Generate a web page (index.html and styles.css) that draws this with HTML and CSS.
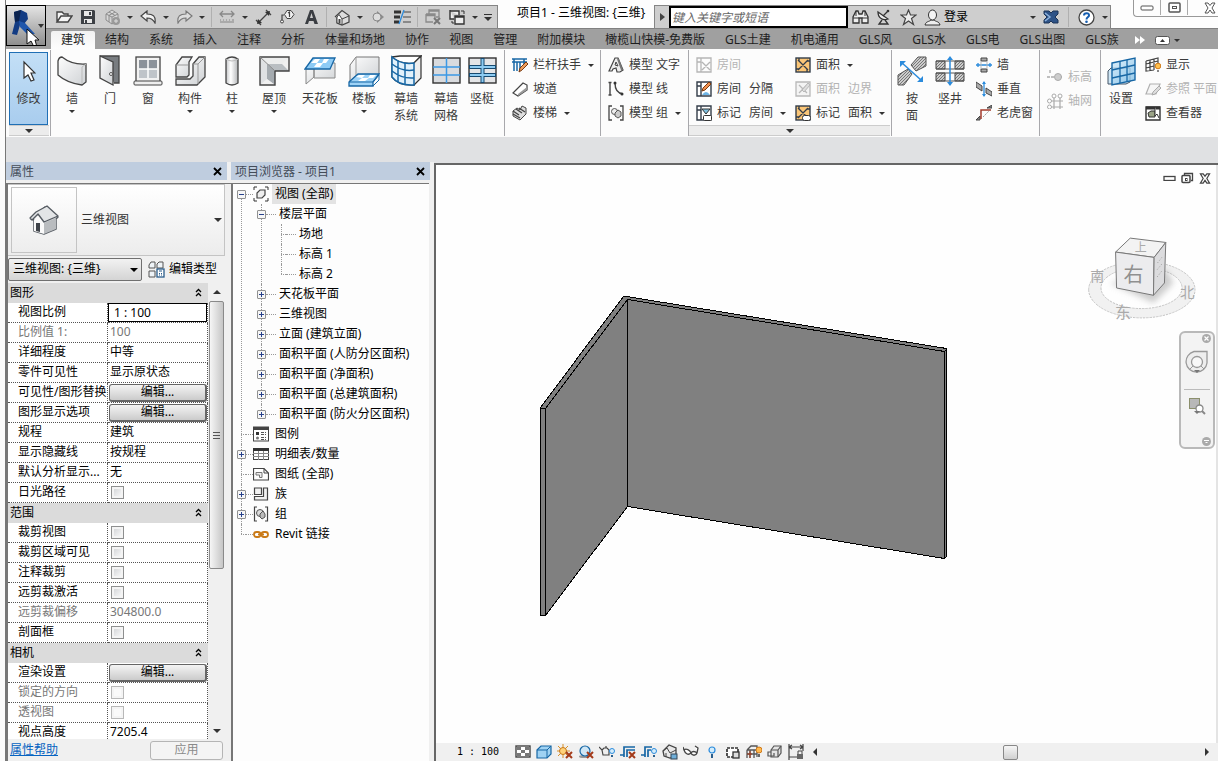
FILE: index.html
```html
<!DOCTYPE html>
<html lang="zh-CN">
<head>
<meta charset="utf-8">
<title>项目1 - 三维视图: {三维}</title>
<link rel="stylesheet" href="styles.css">
</head>
<body>
<svg class="defs" width="0" height="0" aria-hidden="true">
  <defs>
    <linearGradient id="face" x1="0" y1="0" x2="1" y2="1"><stop offset="0" stop-color="#fdfdfd"/><stop offset="1" stop-color="#cfd2d5"/></linearGradient>
    <linearGradient id="tube" x1="0" y1="0" x2="1" y2="0"><stop offset="0" stop-color="#c4c6c8"/><stop offset=".4" stop-color="#fff"/><stop offset="1" stop-color="#b4b6b8"/></linearGradient>
    <linearGradient id="sky" x1="0" y1="0" x2="1" y2="1"><stop offset="0" stop-color="#d5ecfa"/><stop offset="1" stop-color="#7dbde6"/></linearGradient>
    <pattern id="hatch" width="3" height="3" patternUnits="userSpaceOnUse"><rect width="3" height="3" fill="#ccc"/><path d="M0 3L3 0" stroke="#777" stroke-width="1"/></pattern>
    <symbol id="area" viewBox="0 0 16 16"><rect x="1" y="1" width="14" height="14" fill="#fbc677" stroke="#333d49" stroke-width="1.4"/><path d="M3 3L13 13M13 3L3 13M4 1V4M12 12V15M1 12H4M12 4H15" stroke="#333d49" stroke-width="1.3" fill="none"/></symbol>
    <symbol id="house" viewBox="0 0 32 32"><path d="M3 15L17 3L30 13L28 15V25L16 30L6 27V16Z" fill="#dcdee0" stroke="#555b62" stroke-width="1.5" stroke-linejoin="round"/><path d="M16 19V30L28 25V14Z" fill="#b9bcbf"/><path d="M6 16L10 11L16 19V30L6 27Z" fill="#fafafa"/><path d="M2 14L8 8L19 2L30 12L16 18L10 10L4 16Z" fill="#e3e5e7" stroke="#555b62" stroke-width="1.3" stroke-linejoin="round"/><path d="M8 19H12V28L8 27Z" fill="#3f444a"/></symbol>
  </defs>
</svg>
<div class="window">
  <header class="header">
    <button class="app-button" aria-label="应用程序菜单">
      <svg width="38" height="38" viewBox="0 0 38 38"><path d="M7 5L14 3L20 6L21 12L17 17L13 18L10 28L5 27L8 15Z" fill="#123b83"/><path d="M12 14L18 16L28 27L20 27L13 20Z" fill="#1f56ac"/><path d="M7 5L14 3L12 14L8 15Z" fill="#0b234f"/><path d="M31 17H37L34 21Z" fill="#333"/><path d="M20 22V37L24 34L27 40H30L28 33H32Z" fill="#fff" stroke="#111"/></svg>
    </button>
    <div class="title-row">
      <nav class="quick" aria-label="快速访问工具栏">
        <button class="tool" aria-label="打开"><svg width="18" height="16" viewBox="0 0 18 16"><path d="M2 13V3H7L9 5H13V7M2 13L6 7H17L13 13Z" fill="#f4f4f4" stroke="#444" stroke-width="1.4"/></svg></button>
        <button class="tool" aria-label="保存"><svg width="16" height="16" viewBox="0 0 16 16"><path d="M1 1H14L15 2V15H1Z" fill="#3d4045"/><path d="M4 2H12V7H4ZM4 10H12V14H4Z" fill="#e8e8e8"/><path d="M9 3H11V6H9ZM5 11H7V14H5Z" fill="#3d4045"/></svg></button>
        <button class="tool" aria-label="同步"><svg width="17" height="17" viewBox="0 0 17 17"><path d="M2 5L8 1L14 5V11L8 15L2 11ZM2 5L8 8L14 5M8 8V15M5 3L11 6.500M11 3L5 6.500V13" fill="#d8d8d8" stroke="#8c8c8c"/><circle cx="12" cy="12" r="4" fill="#999"/><path d="M10 12H14M12 10V14" stroke="#ddd"/></svg></button>
        <button class="drop" aria-label="同步选项"><i class="caret"></i></button>
        <button class="tool" aria-label="放弃"><svg width="17" height="14" viewBox="0 0 17 14"><path d="M1 6L7 1V4C13 4 16 6 15 13C13 9 11 8 7 8V11Z" fill="#f2f2f2" stroke="#444" stroke-width="1.2"/></svg></button>
        <button class="drop" aria-label="放弃列表"><i class="caret"></i></button>
        <button class="tool" aria-label="重做"><svg width="17" height="14" viewBox="0 0 17 14"><path d="M16 6L10 1V4C4 4 1 6 2 13C4 9 6 8 10 8V11Z" fill="#ddd" stroke="#777" stroke-width="1.1"/></svg></button>
        <button class="drop" aria-label="重做列表"><i class="caret"></i></button>
        <span class="sep"></span>
        <button class="tool" aria-label="测量"><svg width="16" height="14" viewBox="0 0 16 14"><path d="M1 4H15M4 1L1 4L4 7M12 1L15 4L12 7" fill="none" stroke="#888" stroke-width="1.3"/><path d="M1 9H15V13H1Z" fill="#aaa"/><path d="M3 9V11M6 9V11M9 9V11M12 9V11" stroke="#eee"/></svg></button>
        <button class="drop" aria-label="测量选项"><i class="caret"></i></button>
        <button class="tool" aria-label="对齐尺寸标注"><svg width="17" height="17" viewBox="0 0 17 17"><path d="M3 14L14 3M1 11L6 16M11 1L16 6" stroke="#444" stroke-width="1.3"/><path d="M2 15L3 10L7 14ZM15 2L10 3L14 7Z" fill="#333"/></svg></button>
        <button class="tool" aria-label="按类别标记"><svg width="16" height="16" viewBox="0 0 16 16"><path d="M8 1.500H12L15 5.500L12 9.500H8L5.500 5.500Z" fill="#f2f2f2" stroke="#444"/><path d="M9 4L10.500 3V8M5 6H3V11" stroke="#444" stroke-width="1.2" fill="none"/><circle cx="3" cy="12.500" r="1.500" fill="#eee" stroke="#444"/></svg></button>
        <button class="tool" aria-label="文字"><svg width="15" height="16" viewBox="0 0 15 16"><path d="M1 15L6 1H9L14 15H10.500L9.500 12H5L4 15ZM6 9H9L7.500 4Z" fill="#3a3d42"/></svg></button>
        <span class="sep"></span>
        <button class="tool" aria-label="默认三维视图"><svg width="17" height="17" viewBox="0 0 17 17"><path d="M1 8L8 1.500L15 6.500V13L8 16L3 14V8" fill="#ddd" stroke="#444" stroke-width="1.200"/><path d="M3 8L5 5.500L8 10V15.500L3 14Z" fill="#fff" stroke="#444"/><path d="M8 10L15 7" stroke="#444"/><path d="M4.500 10H6.500V14H4.500Z" fill="#444"/></svg></button>
        <button class="drop" aria-label="三维视图选项"><i class="caret"></i></button>
        <button class="tool" aria-label="剖面"><svg width="16" height="16" viewBox="0 0 16 16"><path d="M7 2L14 8L7 14Z" fill="#8c8c8c"/><circle cx="7" cy="8" r="4" fill="#ddd" stroke="#888"/></svg></button>
        <button class="tool" aria-label="细线"><svg width="17" height="16" viewBox="0 0 17 16"><path d="M0 3H7M0 8H6M0 13H5" stroke="#333" stroke-width="3"/><path d="M10 3H17M9 8H17M9 13H17" stroke="#444"/><path d="M5 15L10 1" stroke="#2b8bdc" stroke-width="1.3"/></svg></button>
        <span class="sep"></span>
        <button class="tool" aria-label="关闭隐藏窗口"><svg width="16" height="16" viewBox="0 0 16 16"><path d="M4 5V1H14V8H11M1 5H10V9M1 5V13H8M1 6.500H10M4 2H14" fill="none" stroke="#8a8a8a" stroke-width="1.300"/><path d="M9 9L15 15M15 9L9 15" stroke="#777" stroke-width="2"/></svg></button>
        <button class="tool" aria-label="切换窗口"><svg width="17" height="16" viewBox="0 0 17 16"><path d="M1 2H10V6M1 1V10H5M6 7H15V15H6ZM6 8H15" fill="#eee" stroke="#333" stroke-width="1.400"/><path d="M12 2H15V5M3 12V14H5" stroke="#333" fill="none"/></svg></button>
        <button class="drop" aria-label="窗口列表"><i class="caret"></i></button>
        <button class="drop custom" aria-label="自定义快速访问工具栏"><i class="bar"></i><i class="caret big"></i></button>
      </nav>
      <h1 class="title">项目1 - 三维视图: {三维}</h1>
      <div class="info">
        <button class="drop" aria-label="展开"><svg width="5" height="8"><path d="M0 0L5 4L0 8Z" fill="#444"/></svg></button>
        <input class="search" type="text" placeholder="键入关键字或短语" aria-label="搜索">
        <button class="tool" aria-label="搜索"><svg width="17" height="16" viewBox="0 0 17 16"><path d="M1 14V8L4 2H6L7 5H10L11 2H13L16 8V14H10V9H7V14Z" fill="#eee" stroke="#333" stroke-width="1.300"/><path d="M1 9H7M10 9H16M4 2V7M13 2V7" stroke="#333"/></svg></button>
        <button class="tool" aria-label="通讯中心"><svg width="16" height="17" viewBox="0 0 16 17"><path d="M2 3C2 9 7 12 12 10Z" fill="#eee" stroke="#333" stroke-width="1.300"/><path d="M7 7L12 2M6 11L3 15H12L9 11" stroke="#333" stroke-width="1.300" fill="none"/><circle cx="12" cy="2" r="1.300" fill="#333"/></svg></button>
        <button class="tool" aria-label="收藏夹"><svg width="17" height="17" viewBox="0 0 17 17"><path d="M8.500 1L10.500 6H16L11.500 9.500L13.500 15.500L8.500 12L3.500 15.500L5.500 9.500L1 6H6.500Z" fill="#eee" stroke="#444" stroke-width="1.200"/></svg></button>
        <button class="tool" aria-label="用户"><svg width="17" height="17" viewBox="0 0 17 17"><path d="M1 16C2 12 5 13 7 11H10C12 13 15 12 16 16Z" fill="#eee" stroke="#333"/><ellipse cx="8.500" cy="6" rx="4" ry="5" fill="#f4f4f4" stroke="#333"/></svg></button>
        <button class="login">登录<i class="caret"></i></button>
        <button class="tool exchange" aria-label="Exchange 应用程序"><svg width="16" height="14" viewBox="0 0 16 14"><path d="M1 1H6L8 3L10 1H15V4L12 7L15 10V13H10L8 11L6 13H1V10L4 7L1 4Z" fill="#2e5387" stroke="#1c3457"/><path d="M2 3L7 7L2 11" fill="none" stroke="#8fb4df" stroke-width="1.500"/></svg></button>
        <span class="sep"></span>
        <button class="tool help" aria-label="帮助"><svg width="17" height="17" viewBox="0 0 17 17"><circle cx="8.500" cy="8.500" r="7.500" fill="#fff" stroke="#444" stroke-width="1.300"/><path d="M6 6.500C6 3.500 11.500 3.500 11 6.500C11 8 8.500 8 8.500 10.500" stroke="#155db0" stroke-width="2" fill="none"/><circle cx="8.500" cy="12.800" r="1.300" fill="#155db0"/></svg></button>
        <button class="drop narrow" aria-label="帮助选项"><i class="caret"></i></button>
      </div>
      <div class="win-controls">
        <button aria-label="最小化"><svg width="14" height="8"><rect x="1" y="2" width="12" height="4" rx="1" fill="#fff" stroke="#555"/></svg></button>
        <button aria-label="还原"><svg width="13" height="12"><rect x="1" y="1" width="11" height="9" rx="1" fill="#fff" stroke="#555" stroke-width="1.500"/><rect x="4.500" y="4.500" width="4" height="2" fill="#fff" stroke="#555"/></svg></button>
        <button aria-label="关闭"><svg width="12" height="12" viewBox="0 0 12 12"><path d="M1 1H4L6 3.500L8 1H11L8 6L11 11H8L6 8L4 11H1L4 6Z" fill="#fff" stroke="#555"/></svg></button>
      </div>
    </div>
    <nav class="tabs" aria-label="功能区选项卡">
      <button class="tab on">建筑</button><button class="tab">结构</button><button class="tab">系统</button><button class="tab">插入</button><button class="tab">注释</button><button class="tab">分析</button><button class="tab">体量和场地</button><button class="tab">协作</button><button class="tab">视图</button><button class="tab">管理</button><button class="tab">附加模块</button><button class="tab">橄榄山快模-免费版</button><button class="tab">GLS土建</button><button class="tab">机电通用</button><button class="tab">GLS风</button><button class="tab">GLS水</button><button class="tab">GLS电</button><button class="tab">GLS出图</button><button class="tab">GLS族</button>
      <button class="more" aria-label="更多选项卡"><svg width="10" height="8"><path d="M0 0L5 4L0 8ZM5 0L10 4L5 8Z" fill="#fff"/></svg></button>
      <button class="more" aria-label="最小化功能区"><svg width="15" height="9"><rect x=".5" y=".5" width="14" height="8" rx="2" fill="#fff" stroke="#555"/><path d="M5 6H10L7.500 3Z" fill="#333"/></svg><i class="caret"></i></button>
    </nav>
  </header>

  <section class="ribbon" aria-label="建筑">
    <div class="group modify">
      <button class="modify-button"><svg width="14" height="24" viewBox="0 0 14 24"><path d="M2 2V18L6 15L9 21L12 20L9 13H13Z" fill="#fff" stroke="#333" stroke-width="1.200"/></svg><span>修改</span></button>
      <button class="expander" aria-label="选择"><i class="caret big"></i></button>
    </div>
    <div class="group build">
      <button class="large w40"><svg viewBox="0 0 32 32"><path d="M2 6Q3 2 6 2Q16 10 30 9V27L26 30Q11 28 2 20Z" fill="url(#face)" stroke="#444" stroke-width="1.300"/><path d="M26 12V29M26 12L30 9" fill="none" stroke="#bbb"/></svg><span>墙</span><i class="caret"></i></button>
      <button class="large w36"><svg viewBox="0 0 32 32"><path d="M6 1H25V28H20" fill="#787c80" stroke="#444" stroke-width="1.300"/><path d="M6 1L19 7V30L6 23Z" fill="url(#face)" stroke="#444" stroke-width="1.300"/><circle cx="17" cy="19" r="1.500" fill="#fff" stroke="#555"/></svg><span>门</span></button>
      <button class="large w40"><svg viewBox="0 0 32 32"><rect x="4" y="2" width="24" height="25" fill="#f2f2f2" stroke="#444" stroke-width="1.300"/><path d="M7 5H25V23H7Z" fill="#8b929a"/><path d="M7 14H25V23H7Z" fill="#bfc4c9"/><path d="M16 5V23M7 14H25" stroke="#fff" stroke-width="1.500"/><rect x="2" y="26" width="28" height="4" rx="1" fill="#eee" stroke="#444"/></svg><span>窗</span></button>
      <button class="large w44"><svg viewBox="0 0 32 32"><path d="M2 10L8 2H18L15 7V20L13 22H2Z" fill="url(#face)" stroke="#444" stroke-width="1.300"/><path d="M19 9L25 2H31V22L23 30H2V24H16L19 21Z" fill="url(#face)" stroke="#444" stroke-width="1.300"/><path d="M2 10H14M19 9H24L31 2M24 9V29" fill="none" stroke="#999"/></svg><span>构件</span><i class="caret"></i></button>
      <button class="large w40"><svg viewBox="0 0 32 32"><path d="M10 4Q16 0 22 4V28Q16 32 10 28Z" fill="url(#tube)" stroke="#444" stroke-width="1.300"/><path d="M10 4Q16 8 22 4" fill="none" stroke="#bbb"/></svg><span>柱</span><i class="caret"></i></button>
      <button class="large w44"><svg viewBox="0 0 32 32"><path d="M2 2H31V16H17V30H2Z" fill="#dfe1e3"/><path d="M2 2H31L25 9H9Z" fill="#eceded"/><path d="M9 9H25L31 16H17Z" fill="#b9bec2"/><path d="M9 9V24L17 30V16Z" fill="#a5abb0"/><path d="M2 30L9 24L17 30Z" fill="#f0f0f0"/><path d="M31 2V16L24 9Z" fill="#f0f0f0"/><path d="M2 2H31V16H17V30H2Z" fill="none" stroke="#444" stroke-width="1.400"/><path d="M2 2L17 16" stroke="#888"/></svg><span>屋顶</span><i class="caret"></i></button>
      <button class="large w48"><svg viewBox="0 0 32 32"><path d="M2 14V29L10 22V14ZM10 8H31V23H10Z" fill="url(#face)" stroke="#888"/><path d="M1 14L9 3H31L26 14Z" fill="#8ecbf5" stroke="#1767a5" stroke-width="1.300"/><path d="M7 8L11 4H16L13 8ZM13 8H19L16 12H10ZM20 4H25L22 8H18Z" fill="#fff"/></svg><span>天花板</span></button>
      <button class="large w40"><svg viewBox="0 0 32 32"><path d="M2 10L8 2H31V20H9L2 26Z" fill="url(#face)" stroke="#777"/><path d="M8 2V20" stroke="#999"/><path d="M1 27L10 19H31L25 27V31H1Z" fill="#9ed3f7" stroke="#1767a5" stroke-width="1.300"/><path d="M8 22L11 20H17L14 23ZM14 23H21L17 26H10ZM22 20H28L25 23H20Z" fill="#fff"/><path d="M1 27H25L31 20V25L25 31" fill="none" stroke="#1767a5"/></svg><span>楼板</span><i class="caret"></i></button>
      <button class="large w44"><svg viewBox="0 0 32 32"><path d="M2 2L10 1H31L24 8V30Q9 31 2 22Z" fill="#fff" stroke="#333" stroke-width="1.300"/><path d="M2 2Q11 10 24 8L31 1V23L24 30" fill="#eee" stroke="#333" stroke-width="1.200"/><path d="M2 2Q11 10 24 8V30Q9 31 2 22Z" fill="#e2f1fb" stroke="#1767a5" stroke-width="1.500"/><path d="M2 9Q12 17 24 15M2 16Q12 24 24 23M8 6V27M15 8V29" fill="none" stroke="#1767a5" stroke-width="1.500"/></svg><span>幕墙<br>系统</span></button>
      <button class="large w36"><svg viewBox="0 0 32 32"><rect x="3" y="3" width="27" height="25" fill="#d9dbde" stroke="#333" stroke-width="1.400"/><path d="M16.500 3V28M3 12H30M3 20H30" stroke="#3d99e5" stroke-width="1.500"/></svg><span>幕墙<br>网格</span></button>
      <button class="large w36"><svg viewBox="0 0 32 32"><rect x="3" y="3" width="27" height="25" fill="#e4e5e7" stroke="#333" stroke-width="1.400"/><path d="M3 12H30M3 20H30M16.500 3V28" stroke="#174a70" stroke-width="4"/><path d="M4 12H29M4 20H29M16.500 4V27" stroke="#8ccbf2" stroke-width="2"/></svg><span>竖梃</span></button>
    </div>
    <div class="group rows circulation">
      <button class="small"><svg viewBox="0 0 16 16"><path d="M0 2H15M0 5H15M2 2V14M5 5V14M8 5V14M12 2V7" stroke="#1767a5" stroke-width="1.500"/><path d="M7 15L8 11L14 5L16 7L10 13Z" fill="#f0a060" stroke="#7a3b10"/></svg>栏杆扶手<i class="caret"></i></button>
      <button class="small"><svg viewBox="0 0 16 16"><path d="M1 12L11 2L15 4V9L6 15Z" fill="#fff" stroke="#444" stroke-width="1.200"/><path d="M6 15L15 9V6L6 13Z" fill="#999"/></svg>坡道</button>
      <button class="small"><svg viewBox="0 0 16 16"><path d="M1 6L5 3L8 5L10 1L14 3V9L8 15L1 11Z" fill="#ddd" stroke="#444"/><path d="M1 6L7 10M4 4L10 8M7 3L13 7M1 9L8 13" stroke="#444" stroke-width="1.300"/></svg>楼梯<i class="caret"></i></button>
    </div>
    <div class="group rows model-group">
      <button class="small"><svg viewBox="0 0 16 16"><path d="M1 14L7 1H10L15 13L12 15H9L8 11L5 12L4 14Z" fill="#eee" stroke="#444" stroke-width="1.200"/><path d="M7 8L8 5L10 9Z" fill="#fff" stroke="#444"/><path d="M10 2L14 13" stroke="#777" stroke-width="2"/></svg><span class="pair"><span>模型</span> <span>文字</span></span></button>
      <button class="small"><svg viewBox="0 0 16 16"><path d="M2 2V14M0.500 1.500H3.500M0.500 14H3.500M7 2Q7 12 15 13" stroke="#444" stroke-width="1.400" fill="none"/><circle cx="7" cy="2" r="1.500" fill="#333"/><circle cx="14" cy="13" r="1.500" fill="#333"/></svg><span class="pair"><span>模型</span> <span>线</span></span></button>
      <button class="small"><svg viewBox="0 0 16 16"><path d="M4 1H1V15H4M12 1H15V15H12" fill="none" stroke="#444" stroke-width="1.300"/><circle cx="6.500" cy="6.500" r="3" fill="#eee" stroke="#555"/><path d="M7 8L10 5L13 7V11L10 13L7 11Z" fill="#ccc" stroke="#555"/></svg><span class="pair"><span>模型</span> <span>组</span></span><i class="caret"></i></button>
    </div>
    <div class="group room">
      <div class="room-grid">
        <button class="small" disabled><svg viewBox="0 0 16 16"><path d="M1 1H15V15H1ZM5 1V15M1 5H5M6 5L14 13M14 5L6 13" fill="none" stroke="#b5b5b5" stroke-width="1.300"/></svg>房间</button>
        <button class="small"><svg width="16" height="16"><use href="#area"/></svg>面积<i class="caret"></i></button>
        <button class="small"><svg viewBox="0 0 16 16"><path d="M1 1H15V15H1ZM5 1V15M1 5H5" fill="#fff" stroke="#333d49" stroke-width="1.400"/><path d="M6 14Q10 8 14 14Z" fill="#6db4e6"/><path d="M6 10L7 7L13 1L15 3L9 9Z" fill="#f09050" stroke="#7a3b10"/></svg><span class="pair wide"><span>房间</span> <span>分隔</span></span></button>
        <button class="small" disabled><svg viewBox="0 0 16 16"><path d="M1 1H15V15H1ZM4 4L12 12M4 12L12 4" fill="#f4f4f4" stroke="#b8b8b8" stroke-width="1.300"/><path d="M7 9L13 2L15 4L9 11Z" fill="#ddd" stroke="#b8b8b8"/></svg><span class="pair wide"><span>面积</span> <span>边界</span></span></button>
        <button class="small"><svg viewBox="0 0 16 16"><path d="M1 1H15V15H1ZM5 1V15M1 5H5" fill="#fff" stroke="#333d49" stroke-width="1.400"/><path d="M6 4H14L10 9Z" fill="#7ec0e0" stroke="#333"/><rect x="7.500" y="10.500" width="8" height="5" rx="1" fill="#fff" stroke="#333"/></svg><span class="pair wide"><span>标记</span> <span>房间</span></span><i class="caret"></i></button>
        <button class="small"><svg viewBox="0 0 16 16"><use href="#area" width="16" height="16"/><rect x="7.500" y="10.500" width="8" height="5" rx="2" fill="#fff" stroke="#333"/></svg><span class="pair wide"><span>标记</span> <span>面积</span></span><i class="caret"></i></button>
      </div>
      <button class="expander" aria-label="房间和面积"><i class="caret big"></i></button>
    </div>
    <div class="group opening">
      <button class="large w40"><svg viewBox="0 0 32 32"><path d="M2 30V20L12 14L16 19L8 30ZM30 2H22L15 10L20 16L30 11Z" fill="url(#hatch)" stroke="#555"/><path d="M5 7L25 25" stroke="#2b8bdc" stroke-width="1.500"/><path d="M4 6H10L4 12ZM27 27H21L27 21Z" fill="#2b8bdc"/></svg><span>按<br>面</span></button>
      <button class="large w36"><svg viewBox="0 0 32 32"><path d="M2 6H11V14H2ZM21 6H30V14H21ZM2 18H11V26H2ZM21 18H30V26H21Z" fill="url(#hatch)" stroke="#444"/><path d="M2 6H30M2 14H30M2 18H30M2 26H30" stroke="#555"/><path d="M16 3V29" stroke="#2b8bdc" stroke-width="1.500"/><path d="M13 5L16 1L19 5ZM13 27L16 31L19 27Z" fill="#2b8bdc"/></svg><span>竖井</span></button>
      <div class="stack">
        <button class="small"><svg viewBox="0 0 16 16"><path d="M5 1H11V4H5ZM5 12H11V15H5Z" fill="#aaa" stroke="#444"/><path d="M0 8H16M2 6V10M14 6V10" stroke="#2b8bdc" stroke-width="1.300"/><path d="M5 4V12M11 4V12" stroke="#bbb"/></svg>墙</button>
        <button class="small"><svg viewBox="0 0 16 16"><path d="M0 1L6 5V10L0 6ZM10 7L16 11V15L10 12Z" fill="#aaa" stroke="#444"/><path d="M8 1V15" stroke="#2b8bdc" stroke-width="1.300"/><path d="M6 3L8 0L10 3ZM6 13L8 16L10 13Z" fill="#2b8bdc"/></svg>垂直</button>
        <button class="small"><svg viewBox="0 0 16 16"><path d="M0 15L4 11V15ZM11 3L16 0V3Z" fill="#888" stroke="#444"/><path d="M5 14V5H15" stroke="#a33b2c" stroke-width="1.500" fill="none"/><path d="M7 12L13 6" stroke="#999" stroke-dasharray="2 1"/></svg>老虎窗</button>
      </div>
    </div>
    <div class="group rows datum">
      <button class="small" disabled><svg viewBox="0 0 16 16"><path d="M0 8H16M3 1V5" stroke="#aaa" stroke-dasharray="3 1" stroke-width="1.300"/><circle cx="11" cy="8" r="3.500" fill="#ccc" stroke="#aaa"/></svg>标高</button>
      <button class="small" disabled><svg viewBox="0 0 16 16"><path d="M7 5V16M13 5V16M4 8H16M4 14H16" stroke="#aaa" stroke-width="1.200"/><g fill="#fff" stroke="#aaa"><circle cx="7" cy="3" r="2"/><circle cx="13" cy="3" r="2"/><circle cx="2.500" cy="8" r="2"/><circle cx="2.500" cy="14" r="2"/></g></svg>轴网</button>
    </div>
    <div class="group plane">
      <button class="large w40"><svg viewBox="0 0 32 32"><path d="M3 16L6 13H25V27L21 29H3Z" fill="#cfe6f5" stroke="#456"/><path d="M7 8L30 3V25L7 30Z" fill="url(#sky)" fill-opacity=".8" stroke="#1767a5" stroke-width="1.400"/><path d="M15 6V28M22 5V26M7 15L30 10M7 23L30 18" stroke="#1767a5" stroke-width="1.300"/></svg><span>设置</span></button>
      <div class="stack">
        <button class="small"><svg viewBox="0 0 16 16"><path d="M1 4L13 1V8M1 4V14L9 13M1 7L13 4M1 11L9 9M5 3V14M9 2V13" fill="none" stroke="#444" stroke-width="1.200"/><circle cx="13" cy="9" r="2.800" fill="#ffc04d" stroke="#d07a1a"/><path d="M12 13H14V15H12Z" fill="#888"/></svg>显示</button>
        <button class="small" disabled><svg viewBox="0 0 16 16"><path d="M5 3H15L11 13H1Z" fill="#f6f6f6" stroke="#b0b0b0" stroke-width="1.200"/><path d="M7 14L8 11L14 5L16 7L10 13Z" fill="#ddd" stroke="#aaa"/></svg><span class="pair"><span>参照</span> <span>平面</span></span></button>
        <button class="small"><svg viewBox="0 0 16 16"><path d="M1 2H15V15H1Z" fill="#fff" stroke="#333" stroke-width="1.400"/><path d="M1 3H15" stroke="#333" stroke-width="3"/><path d="M3 8L6 6H10V12H4Z" fill="#9aa386" stroke="#333"/><path d="M10 2V11L12 9L14 13" stroke="#333" fill="#fff"/></svg>查看器</button>
      </div>
    </div>
  </section>

  <main class="workspace">
    <aside class="properties">
      <div class="palette-title"><h2>属性</h2><button aria-label="关闭属性"><svg width="9" height="9"><path d="M1 1L8 8M8 1L1 8" stroke="#000" stroke-width="1.800"/></svg></button></div>
      <div class="palette-body">
        <button class="type-selector"><span class="thumb"><svg width="32" height="32"><use href="#house"/></svg></span><span class="type-name">三维视图</span><i class="caret big"></i></button>
        <div class="type-row">
          <span class="select"><select aria-label="实例"><option>三维视图: {三维}</option></select><i class="caret big"></i></span>
          <button class="edit-type"><svg width="17" height="17" viewBox="0 0 17 17"><path d="M1 4L3 1H7V7H1ZM9 3L11 1H15V7H9ZM1 10H7V16H1Z" fill="#eef3f7" stroke="#555"/><rect x="9" y="8" width="7" height="8" fill="#fff" stroke="#2a5c8a" stroke-width="1.300"/><path d="M11 10H14M11 12.500H12M13 12.500H14M11 14H12M13 14H14" stroke="#2a5c8a"/></svg>编辑类型</button>
        </div>
        <div class="grid-area">
          <div class="grid-scroll">
            <table class="props">
              <tbody>
                <tr class="head"><th colspan="2">图形<svg width="7" height="9"><path d="M1 4L3.500 1.500L6 4M1 8L3.500 5.500L6 8" stroke="#000" stroke-width="1.300" fill="none"/></svg></th></tr>
                <tr><th><label for="scale">视图比例</label></th><td><input id="scale" class="field" type="text" value="1 : 100"></td></tr>
                <tr class="off"><th>比例值 1:</th><td>100</td></tr>
                <tr><th>详细程度</th><td>中等</td></tr>
                <tr><th>零件可见性</th><td>显示原状态</td></tr>
                <tr><th>可见性/图形替换</th><td><button class="edit">编辑...</button></td></tr>
                <tr><th>图形显示选项</th><td><button class="edit">编辑...</button></td></tr>
                <tr><th>规程</th><td>建筑</td></tr>
                <tr><th>显示隐藏线</th><td>按规程</td></tr>
                <tr><th>默认分析显示...</th><td>无</td></tr>
                <tr><th><label for="sun">日光路径</label></th><td><input id="sun" type="checkbox"></td></tr>
              </tbody>
              <tbody>
                <tr class="head"><th colspan="2">范围<svg width="7" height="9"><path d="M1 4L3.500 1.500L6 4M1 8L3.500 5.500L6 8" stroke="#000" stroke-width="1.300" fill="none"/></svg></th></tr>
                <tr><th><label for="crop">裁剪视图</label></th><td><input id="crop" type="checkbox"></td></tr>
                <tr><th><label for="cropv">裁剪区域可见</label></th><td><input id="cropv" type="checkbox"></td></tr>
                <tr><th><label for="anno">注释裁剪</label></th><td><input id="anno" type="checkbox"></td></tr>
                <tr><th><label for="far">远剪裁激活</label></th><td><input id="far" type="checkbox"></td></tr>
                <tr class="off"><th>远剪裁偏移</th><td>304800.0</td></tr>
                <tr><th><label for="box">剖面框</label></th><td><input id="box" type="checkbox"></td></tr>
              </tbody>
              <tbody>
                <tr class="head"><th colspan="2">相机<svg width="7" height="9"><path d="M1 4L3.500 1.500L6 4M1 8L3.500 5.500L6 8" stroke="#000" stroke-width="1.300" fill="none"/></svg></th></tr>
                <tr><th>渲染设置</th><td><button class="edit">编辑...</button></td></tr>
                <tr class="off"><th><label for="lock">锁定的方向</label></th><td><input id="lock" type="checkbox" disabled></td></tr>
                <tr class="off"><th><label for="persp">透视图</label></th><td><input id="persp" type="checkbox" disabled></td></tr>
                <tr><th>视点高度</th><td>7205.4</td></tr>
              </tbody>
            </table>
          </div>
          <div class="vscroll"><i class="caret big up"></i><span class="vthumb"><i></i><i></i><i></i></span><i class="caret big"></i></div>
        </div>
        <footer class="prop-foot"><a href="#help">属性帮助</a><button disabled>应用</button></footer>
      </div>
    </aside>

    <aside class="browser">
      <div class="palette-title"><h2>项目浏览器 - 项目1</h2><button aria-label="关闭项目浏览器"><svg width="9" height="9"><path d="M1 1L8 8M8 1L1 8" stroke="#000" stroke-width="1.800"/></svg></button></div>
      <div class="tree-frame">
        <ul class="tree root">
          <li><div class="node"><button class="toggle open" aria-label="折叠"></button><i class="dash"></i><svg viewBox="0 0 16 16"><path d="M4 1H1V4M12 1H15V4M4 15H1V12M12 15H15V12" fill="none" stroke="#333"/><path d="M4 7L7 4H12V9L9 12H4Z" fill="#eee" stroke="#444" stroke-width="1.200"/></svg><span class="name sel">视图 (全部)</span></div>
            <ul class="tree">
              <li><div class="node"><button class="toggle open" aria-label="折叠"></button><i class="dash"></i><span class="name">楼层平面</span></div>
                <ul class="tree">
                  <li><div class="node"><i class="stub"></i><i class="dash"></i><span class="name">场地</span></div></li>
                  <li><div class="node"><i class="stub"></i><i class="dash"></i><span class="name">标高 1</span></div></li>
                  <li><div class="node"><i class="stub"></i><i class="dash"></i><span class="name">标高 2</span></div></li>
                </ul>
              </li>
              <li><div class="node"><button class="toggle" aria-label="展开"></button><i class="dash"></i><span class="name">天花板平面</span></div></li>
              <li><div class="node"><button class="toggle" aria-label="展开"></button><i class="dash"></i><span class="name">三维视图</span></div></li>
              <li><div class="node"><button class="toggle" aria-label="展开"></button><i class="dash"></i><span class="name">立面 (建筑立面)</span></div></li>
              <li><div class="node"><button class="toggle" aria-label="展开"></button><i class="dash"></i><span class="name">面积平面 (人防分区面积)</span></div></li>
              <li><div class="node"><button class="toggle" aria-label="展开"></button><i class="dash"></i><span class="name">面积平面 (净面积)</span></div></li>
              <li><div class="node"><button class="toggle" aria-label="展开"></button><i class="dash"></i><span class="name">面积平面 (总建筑面积)</span></div></li>
              <li><div class="node"><button class="toggle" aria-label="展开"></button><i class="dash"></i><span class="name">面积平面 (防火分区面积)</span></div></li>
            </ul>
          </li>
          <li><div class="node"><i class="stub"></i><i class="dash"></i><svg viewBox="0 0 16 16"><rect x=".5" y="1" width="15" height="14" fill="#fff" stroke="#444"/><path d="M0 2.500H16" stroke="#444" stroke-width="3"/><path d="M3 6H6V9H3Z" fill="#333"/><circle cx="4.500" cy="12" r="1.500" fill="#777"/><path d="M8 6.500H13M8 8.500H13M8 11.500H13M8 13.500H13" stroke="#555" stroke-dasharray="3 1"/></svg><span class="name">图例</span></div></li>
          <li><div class="node"><button class="toggle" aria-label="展开"></button><i class="dash"></i><svg viewBox="0 0 16 16"><rect x=".5" y="2.500" width="15" height="11" fill="#fff" stroke="#444"/><path d="M0 3.500H16" stroke="#333" stroke-width="3"/><path d="M0 7.500H16M0 10.500H16M5.500 5V14M10.500 5V14" stroke="#888"/></svg><span class="name">明细表/数量</span></div></li>
          <li><div class="node"><i class="stub"></i><i class="dash"></i><svg viewBox="0 0 16 16"><path d="M0.500 2.500H11L15.500 7V14H0.500Z" fill="#fff" stroke="#444" stroke-width="1.200"/><path d="M11 2.500V7H15" fill="none" stroke="#444"/><path d="M3 6.500H9V11.500H6.500V9H3Z" fill="#eee" stroke="#777"/></svg><span class="name">图纸 (全部)</span></div></li>
          <li><div class="node"><button class="toggle" aria-label="展开"></button><i class="dash"></i><svg viewBox="0 0 16 16"><path d="M1.500 2H8.500V8.500H1.500ZM10.500 2H14.500V14H1.500V10.500H10.500Z" fill="#f2f2f2" stroke="#444" stroke-width="1.200"/></svg><span class="name">族</span></div></li>
          <li><div class="node"><button class="toggle" aria-label="展开"></button><i class="dash"></i><svg viewBox="0 0 16 16"><path d="M4 1H1.500V15H4M12 1H14.500V15H12" fill="none" stroke="#444" stroke-width="1.200"/><circle cx="7" cy="7" r="3.500" fill="#ddd" stroke="#555"/><path d="M7 8L10 5L12 8V11L9 13L7 11Z" fill="#bbb" stroke="#555"/></svg><span class="name">组</span></div></li>
          <li><div class="node"><i class="stub"></i><i class="dash"></i><svg viewBox="0 0 16 16"><g fill="none" stroke="#c97a17" stroke-width="1.800"><rect x="1" y="6" width="6.500" height="5" rx="2.500"/><rect x="8.500" y="6" width="6.500" height="5" rx="2.500"/><path d="M5 8.500H11"/></g></svg><span class="name">Revit 链接</span></div></li>
        </ul>
      </div>
    </aside>

    <section class="view">
      <div class="canvas">
        <svg class="model" width="430" height="340" viewBox="530 285 430 340" shape-rendering="crispEdges" role="img" aria-label="墙模型">
          <path d="M540.500 407.500L623.500 296.500L626.500 296.500L946.500 348.500V556.500L944.500 558.500L627.500 506.500L545.500 615.500H540.500Z" fill="#808080" stroke="#000"/>
          <path d="M540.500 408.500H545.500V615.500M545.500 408.500L627.500 299.500V506.500M627.500 299.500L944.500 351.500V558.500M944.500 351.500L946.500 349.500" fill="none" stroke="#000"/>
        </svg>
        <div class="view-controls">
          <button aria-label="最小化视图"><svg width="13" height="6"><rect x="1" y="1.500" width="11" height="4" fill="#fff" stroke="#444" stroke-width="1.300"/></svg></button>
          <button aria-label="还原视图"><svg width="13" height="12"><path d="M3.500 3V1.500H11.500V8.500H10" fill="none" stroke="#444" stroke-width="1.300"/><rect x="1" y="3.500" width="8" height="7" rx="1" fill="#fff" stroke="#444" stroke-width="1.500"/><rect x="4.500" y="6.500" width="1.500" height="2" fill="none" stroke="#444"/></svg></button>
          <button aria-label="关闭视图"><svg width="12" height="11" viewBox="0 0 12 12"><path d="M1 1H4L6 3.500L8 1H11L8 6L11 11H8L6 8L4 11H1L4 6Z" fill="#fff" stroke="#444" stroke-width="1.300"/></svg></button>
        </div>
        <svg class="cube" width="113" height="90" viewBox="50 40 340 270">
          <defs><filter id="soft"><feGaussianBlur stdDeviation="9"/></filter></defs>
          <path fill-rule="evenodd" d="M55 210A160 85 0 1 0 375 210A160 85 0 1 0 55 210ZM92 205A122 62 0 1 0 336 205A122 62 0 1 0 92 205Z" fill="#f1f1f1" stroke="#c4c4c4" stroke-width="3" stroke-dasharray="7 3"/>
          <path d="M120 190L250 250L310 190L290 150Z" fill="#aaa" opacity=".6" filter="url(#soft)"/>
          <path d="M180 55L287 68L252 113L136 97Z" fill="#f3f3f3" stroke="#777" stroke-width="3"/>
          <path d="M136 97L252 113L250 227L139 205Z" fill="#ececee" stroke="#777" stroke-width="3"/>
          <path d="M252 113L287 68L283 190L250 227Z" fill="#dcdcde" stroke="#777" stroke-width="3"/>
          <path d="M262 130L276 112M261 150L276 132M261 172L275 154" stroke="#aaa" stroke-width="3" stroke-dasharray="4 5"/>
          <text x="160" y="186" font-size="60" fill="#909090">右</text>
          <text x="194" y="98" font-size="36" fill="#aaa">上</text>
          <text x="60" y="184" font-size="42" fill="#aaa">南</text><text x="134" y="294" font-size="48" fill="#aaa">东</text><text x="330" y="234" font-size="44" fill="#aaa">北</text>
        </svg>
        <nav class="navbar" aria-label="导航栏">
          <button class="corner" aria-label="关闭导航栏"><svg width="9" height="9"><circle cx="4.500" cy="4.500" r="4.500" fill="#aaa"/><path d="M2.500 2.500L6.500 6.500M6.500 2.500L2.500 6.500" stroke="#fff" stroke-width="1.200"/></svg></button>
          <button aria-label="控制盘"><svg width="24" height="24" viewBox="0 0 24 24"><path d="M9 1.500H22V13A10.500 10.500 0 1 1 9 1.500Z" fill="#eee" stroke="#999" stroke-width="1.300"/><circle cx="12" cy="12" r="5.500" fill="#f8f8f8" stroke="#999" stroke-width="1.300"/><path d="M8 16L5 19M16 16L19 19" stroke="#999"/></svg></button>
          <button class="tiny" aria-label="控制盘选项"><i class="caret"></i></button>
          <hr>
          <button aria-label="区域放大"><svg width="18" height="18" viewBox="0 0 18 18"><rect x="1.500" y="1.500" width="10" height="10" fill="#b8b8b8" stroke="#8b8f6c"/><circle cx="11.500" cy="11.500" r="3.500" fill="#fff" stroke="#888" stroke-width="1.300"/><path d="M14 14L17 17" stroke="#888" stroke-width="2"/></svg></button>
          <button class="tiny" aria-label="缩放选项"><i class="caret"></i></button>
          <button class="corner last" aria-label="自定义导航栏"><svg width="9" height="9"><circle cx="4.500" cy="4.500" r="4.500" fill="#aaa"/><path d="M2 3.500H7M3.500 5.500H5.500" stroke="#fff" stroke-width="1.200"/></svg></button>
        </nav>
      </div>
      <div class="view-bar">
        <button class="scale">1 : 100</button>
        <button class="vb" aria-label="详细程度"><svg viewBox="0 0 16 16"><rect x="1" y="2" width="14" height="11" fill="#fff" stroke="#444" stroke-width="1.400"/><path d="M2 3H6V6H2ZM10 3H14V6H10ZM6 6H10V9H6ZM2 9H6V12H2ZM10 9H14V12H10Z" fill="#777"/></svg></button>
        <button class="vb" aria-label="视觉样式"><svg viewBox="0 0 16 16"><path d="M1 6L5 2H15V10L11 14H1Z" fill="#9fd2f3" stroke="#1767a5" stroke-width="1.200"/><path d="M1 6H11V14M11 6L15 2" fill="none" stroke="#1767a5"/></svg></button>
        <button class="vb" aria-label="日光路径"><svg viewBox="0 0 16 16"><path d="M6 0V14M0 7H13M1 2L11 12M11 2L1 12" stroke="#d8912a"/><circle cx="6" cy="7" r="3.500" fill="#ffd27a" stroke="#c8791a"/><path d="M9 8L15 14M15 8L9 14" stroke="#a33a1a" stroke-width="2"/></svg></button>
        <button class="vb" aria-label="阴影"><svg viewBox="0 0 16 16"><ellipse cx="6" cy="12.500" rx="5" ry="1.500" fill="#999"/><circle cx="7" cy="7" r="5" fill="#cfe6f5" stroke="#1767a5" stroke-width="1.200"/><path d="M9 8L15 14M15 8L9 14" stroke="#a33a1a" stroke-width="2"/></svg></button>
        <button class="vb" aria-label="渲染"><svg viewBox="0 0 16 16"><path d="M0 3L3 6L4 11H10V6L8 4H5L3 6M7 2V4" fill="#eee" stroke="#444" stroke-width="1.200"/><circle cx="13" cy="7" r="2.500" fill="#d5edfb" stroke="#2b8bdc"/><path d="M12 11H14V13H12Z" fill="#2b5f8c"/></svg></button>
        <button class="vb" aria-label="裁剪视图"><svg viewBox="0 0 16 16"><path d="M4 13V3H15M7 13V6H15M0 11H4" stroke="#1767a5" stroke-width="1.700" fill="none"/><path d="M9 8L15 14M15 8L9 14" stroke="#a33a1a" stroke-width="2"/></svg></button>
        <button class="vb" aria-label="显示裁剪区域"><svg viewBox="0 0 16 16"><path d="M4 13V3H11M7 13V6H10M0 11H4" stroke="#1767a5" stroke-width="1.700" fill="none"/><circle cx="13" cy="7" r="2.500" fill="#d5edfb" stroke="#2b8bdc"/><path d="M12 11H14V13H12Z" fill="#2b5f8c"/></svg></button>
        <button class="vb" aria-label="锁定三维视图"><svg viewBox="0 0 16 16"><path d="M1 7L7 1L14 4V12L8 14L2 12Z" fill="#e8e8e8" stroke="#444" stroke-width="1.300"/><path d="M1 7L5 4L8 9L14 6M4 9V13" stroke="#444" fill="none"/><rect x="9" y="10" width="6" height="5" fill="#6faed8" stroke="#345"/></svg></button>
        <button class="vb" aria-label="临时隐藏"><svg viewBox="0 0 16 16"><path d="M1 6L0 3M1 6C3 4 7 6 8 9C5 12 2 9 1 6ZM8 9C9 7 12 7 14 9C13 12 9 12 8 9ZM14 9L15 4L12 2" fill="#fff" stroke="#444" stroke-width="1.300"/></svg></button>
        <button class="vb" aria-label="显示隐藏图元"><svg viewBox="0 0 16 16"><circle cx="8" cy="6" r="3" fill="#d5edfb" stroke="#2b8bdc" stroke-width="1.200"/><path d="M7 10H9V14H7Z" fill="#2b5f8c"/></svg></button>
        <button class="vb" aria-label="工作共享显示"><svg viewBox="0 0 16 16"><path d="M2 4H13V13H2Z" fill="#fff" stroke="#333" stroke-width="1.700" stroke-dasharray="3 1"/><rect x="8" y="8" width="6" height="6" fill="#ddd" stroke="#333" stroke-width="1.300"/></svg></button>
        <button class="vb" aria-label="临时视图属性"><svg viewBox="0 0 16 16"><path d="M1 6L5 2H11V13M1 6V14M4 6V14M8 6V14M1 6H11M1 10H11" fill="none" stroke="#555" stroke-width="1.300"/><path d="M4 7V14M1 10H6" stroke="#a33a1a"/><circle cx="13" cy="6" r="3" fill="#ffb84d" stroke="#d07a1a"/><path d="M12 10H14V13H12Z" fill="#666"/></svg></button>
        <button class="vb" aria-label="分析模型"><svg viewBox="0 0 16 16"><path d="M4 6L7 2H14V9L11 13H4Z" fill="#e4e4e4" stroke="#555" stroke-width="1.200"/><path d="M4 6H11V13M11 6L14 2M4 8H1V12H7V9" fill="none" stroke="#555" stroke-width="1.200"/></svg></button>
        <button class="vb" aria-label="约束"><svg viewBox="0 0 16 16"><path d="M1 0V16M15 0V7M1 3H15M4 1L1 3L4 5M12 1L15 3L12 5M1 13H9" fill="none" stroke="#444" stroke-width="1.200"/><rect x="9" y="10" width="6" height="5" fill="#666"/><path d="M10 10V7H14V10" fill="none" stroke="#444"/></svg></button>
        <div class="hscroll"><svg width="4" height="8"><path d="M4 0V8L0 4Z" fill="#333"/></svg><span class="hthumb"></span><svg width="4" height="8"><path d="M0 0V8L4 4Z" fill="#333"/></svg></div>
      </div>
    </section>
  </main>
</div>
</body>
</html>
```
FILE: styles.css
```css
* { box-sizing: border-box; }
html, body { height: 100%; }
body {
  margin: 0;
  padding-left: 5px;
  overflow: hidden;
  background: #fbfbfb;
  color: #000;
  font: 12px/16px "Noto Sans", "Noto Sans CJK SC", sans-serif;
}
button, input, select { font: inherit; color: inherit; }
button { margin: 0; padding: 0; border: 0; background: none; white-space: nowrap; }
h1, h2 { margin: 0; font-size: 12px; font-weight: 400; }
svg { display: block; flex: none; }
.defs { position: absolute; }
.window { display: flex; flex-direction: column; height: 100vh; border-left: 1px solid #777; }

.caret { flex: none; width: 0; height: 0; border: 3px solid transparent; border-top-color: #333; border-bottom: 0; }
.caret.big { border-width: 4px; border-bottom: 0; }
.caret.up { border: 4px solid transparent; border-bottom-color: #333; border-top: 0; }

/* Title bar and tabs */
.header {
  display: grid;
  grid-template: 29px 20px / 40px 1fr;
  flex: none;
  background: linear-gradient(#fdfdfd 28px, #808080 28px, #808080 29px, #a0a0a0 29px);
}
.app-button {
  grid-row: 1 / 3;
  align-self: start;
  height: 41px;
  margin-top: 5px;
  border: 1px solid #000;
  background: linear-gradient(#e4e4e4, #8e8e8e);
  overflow: hidden;
}
.title-row { display: flex; min-width: 0; }
.quick, .info {
  display: flex;
  align-items: center;
  flex: none;
  height: 24px;
  margin-top: 5px;
  border: 1px solid #858585;
  border-left: 0;
  background: #cecece;
}
.quick { padding: 0 2px 0 6px; }
.tool, .drop { display: flex; align-items: center; justify-content: center; width: 24px; height: 22px; }
.drop { width: 12px; }
.custom { flex-direction: column; gap: 2px; width: 14px; }
.bar { width: 8px; height: 1px; background: #333; }
.sep { width: 1px; height: 20px; margin: 0 3px; background: #b0b0b0; }
.title { flex: none; width: 156px; padding: 4px 0 0 19px; line-height: 18px; white-space: nowrap; }
.info { border-left: 1px solid #858585; }
.info > .drop:first-child { width: 14px; }
.search { width: 179px; height: 22px; padding: 0 2px; border: 1px solid #000; outline: 1px solid #000; outline-offset: -2px; border-radius: 0; background: #fff; }
.search::placeholder { color: #666; font-style: italic; opacity: 1; }
.login { display: flex; align-items: center; justify-content: space-between; width: 93px; padding-right: 1px; }
.info .exchange, .info .help { width: 28px; }
.info .narrow { width: 10px; }
.win-controls { display: flex; height: 17px; margin-left: 22px; border: 1px solid #999; border-top: 0; border-right: 0; border-radius: 0 0 0 4px; }
.win-controls button { display: flex; align-items: center; justify-content: center; width: 27px; height: 15px; border-right: 1px solid #aaa; }
.win-controls button:last-child { width: 44px; border: 0; }
.tabs { display: flex; align-items: flex-end; padding-left: 5px; overflow: hidden; }
.tab { height: 18px; padding: 0 10px; color: #1e1e1e; }
.tab.on { border-radius: 2px 2px 0 0; background: linear-gradient(#f2f2f2, #fdfdfd); }
.more { display: flex; align-items: center; gap: 4px; height: 18px; margin: 0 4px 0 6px; }

/* Ribbon */
.ribbon { display: flex; flex: none; height: 88px; overflow: hidden; background: #fcfcfc; color: #3a3a3a; }
.group { display: flex; flex: none; border-right: 1px solid #a8a8ac; margin-top: 1px; padding-top: 3px; height: 86px; }
.group:last-child { border: 0; }
.modify { flex-direction: column; justify-content: space-between; width: 45px; padding: 2px 1px 0 3px; }
.modify-button { display: flex; flex-direction: column; align-items: center; gap: 7px; width: 39px; height: 73px; padding-top: 7px; border: 1px solid #1f6fb5; background: linear-gradient(#c3dff6, #a9cdee); }
.expander { display: flex; align-items: center; justify-content: center; height: 11px; border-top: 1px solid #ccc; border-bottom: 1px solid #ccc; background: #ececec; }
.build { width: 454px; padding-left: 1px; }
.large { display: flex; flex-direction: column; align-items: center; flex: none; padding-top: 2px; line-height: 17px; }
.large svg { width: 32px; height: 32px; margin-bottom: 3px; }
.large .caret { margin-top: 3px; }
.w36 { width: 36px; }
.w40 { width: 40px; }
.w44 { width: 44px; }
.w48 { width: 48px; }
.rows { flex-direction: column; padding-left: 7px; }
.circulation { width: 96px; }
.model-group { width: 88px; }
.small { display: flex; align-items: center; gap: 5px; height: 24px; }
.small svg { width: 16px; height: 16px; }
.small:disabled { color: #b4b4b4; }
.small .caret { margin-left: 2px; }
.pair { display: inline-flex; gap: 3px; }
.pair.wide { gap: 8px; }
.room { flex-direction: column; justify-content: space-between; width: 203px; }
.room-grid { display: grid; grid-template-columns: 99px 96px; padding-left: 7px; }
.room .expander { margin-right: 1px; }
.opening { width: 148px; }
.stack { display: flex; flex-direction: column; padding-left: 8px; }
.datum { width: 61px; padding-top: 15px; }
.plane .stack { padding-left: 4px; }

/* Palettes */
.workspace { display: flex; flex: 1; min-height: 0; padding-top: 25px; background: #e0e1e3; }
.properties, .browser { display: flex; flex-direction: column; flex: none; }
.properties { width: 225px; background: #f0f0f0; }
.browser { width: 203px; background: #f0f0f0; border-right: 4px solid #f0f0f0; }
.palette-title { display: flex; align-items: center; justify-content: space-between; flex: none; height: 18px; padding: 1px 5px 0 4px; background: #bfcddf; color: #444c58; }
.properties .palette-title { margin-right: 4px; }
.palette-body { display: flex; flex-direction: column; flex: 1; min-height: 0; margin-top: 3px; padding-right: 6px; border-left: 2px solid #777; border-top: 1px solid #777; }
.type-selector { display: flex; align-items: center; flex: none; height: 72px; padding: 0 2px 0 3px; border: 1px solid #c4c4c4; border-left: 0; background: linear-gradient(#fff, #ececec); color: #333; }
.thumb { display: grid; place-items: center; width: 66px; height: 66px; margin-right: 4px; border: 1px solid #c4c4c4; }
.type-name { flex: 1; text-align: left; }
.type-row { display: flex; align-items: center; gap: 6px; flex: none; height: 27px; padding-bottom: 1px; }
.select { position: relative; width: 134px; }
.select select { width: 100%; height: 23px; padding: 0 4px; appearance: none; border: 1px solid #707070; border-radius: 2px; background: linear-gradient(#f2f2f2, #d4d4d4); }
.select .caret { position: absolute; right: 4px; top: 10px; border-top-color: #000; }
.edit-type { display: flex; align-items: center; gap: 4px; }
.grid-area { display: flex; flex: 1; min-height: 0; }
.grid-scroll { flex: 1; min-width: 0; overflow: hidden; background: #fff; }
.props { width: 100%; table-layout: fixed; border-collapse: separate; border-spacing: 0; }
.props th, .props td { height: 20px; padding: 2px 0 3px 2px; line-height: 14px; font-weight: 400; text-align: left; vertical-align: middle; white-space: nowrap; overflow: hidden; border-right: 1px dotted #555; border-bottom: 1px dotted #555; }
.props th { padding-left: 10px; }
.props .head th { padding: 2px 6px 2px 2px; line-height: 16px; background: #dbdbdb; border: 0; }
.head svg { float: right; margin-top: 3px; }
.off { color: #777; }
.props td:has(.field), .props td:has(.edit), .props td:has([type="checkbox"]) { padding-top: 0; padding-bottom: 0; }
.props td:has(.field), .props td:has(.edit) { padding-left: 0; }
.field { display: block; width: 100%; height: 19px; padding: 0 5px; border: 1px solid #000; outline: 0; }
.edit { display: block; width: 98px; height: 18px; margin-left: 1px; border: 1px solid #666; border-right-width: 2px; border-bottom-width: 2px; border-radius: 3px; background: linear-gradient(#f4f4f4, #cbcbcb); line-height: 14px; }
.props input[type="checkbox"] { display: block; width: 13px; height: 13px; margin: 0 0 0 1px; appearance: none; border: 1px solid #8e8f8f; background: linear-gradient(135deg, #cdcfd2, #fff); box-shadow: inset 0 0 0 2px #f4f4f4; }
.props input[type="checkbox"]:disabled { border-color: #b8b8b8; background: #fafafa; }
.vscroll { display: flex; flex-direction: column; align-items: center; width: 17px; padding: 7px 0 6px; background: #f0f0f0; }
.vthumb { display: flex; flex-direction: column; align-items: center; justify-content: center; gap: 2px; flex: 0 1 268px; width: 15px; margin: 7px 0 auto; border: 1px solid #8a8a8a; border-radius: 2px; background: linear-gradient(90deg, #f6f6f6, #c6c6c6); }
.vthumb i { width: 7px; height: 1px; background: #555; }
.prop-foot { display: flex; align-items: center; justify-content: space-between; flex: none; height: 22px; padding: 0 2px; }
.prop-foot a { color: #0563c1; }
.prop-foot button { width: 73px; height: 19px; border: 1px solid #b5b5b5; border-radius: 3px; background: #f4f4f4; color: #8a8a8a; }

/* Project browser */
.tree-frame { flex: 1; min-height: 0; margin: 3px 1px 0 0; padding-left: 4px; border-left: 2px solid #777; border-top: 1px solid #777; background: #fdfdfd; overflow: hidden; }
.tree { margin: 0; padding: 0; list-style: none; }
.tree .tree { padding-left: 20px; }
.tree li { position: relative; }
.tree li::before { content: ""; position: absolute; left: 4px; top: 0; bottom: 0; border-left: 1px dotted #999; }
.tree li:last-child::before { bottom: auto; height: 10px; }
.root > li:first-child::before { top: 10px; }
.node { display: flex; align-items: center; height: 20px; white-space: nowrap; }
.node svg { width: 16px; height: 16px; margin-right: 3px; }
.toggle { position: relative; width: 9px; height: 9px; border: 1px solid #919191; border-radius: 1px; background: #f6f6f6; }
.toggle::before { content: ""; position: absolute; left: 1px; top: 3px; width: 5px; height: 1px; background: #27418c; }
.toggle:not(.open)::after { content: ""; position: absolute; left: 3px; top: 1px; width: 1px; height: 5px; background: #27418c; }
.stub { width: 5px; height: 1px; margin-left: 4px; border-top: 1px dotted #999; }
.dash { width: 10px; height: 1px; border-top: 1px dotted #999; }
.root > li > .node > .dash { width: 7px; }
.name { padding: 0 3px; line-height: 20px; }
.sel { background: #e3e3e3; }

/* Drawing area */
.view { display: flex; flex-direction: column; flex: 1; min-width: 0; margin-top: 1px; border-left: 2px solid #666; border-top: 2px solid #666; }
.canvas { position: relative; flex: 1; min-height: 0; border-right: 2px solid #e4e4e4; background: #fefefe; overflow: hidden; }
.model { position: absolute; left: 94px; top: 120px; }
.view-controls { position: absolute; right: 5px; top: 7px; display: flex; align-items: center; gap: 5px; }
.cube { position: absolute; right: 16px; top: 68px; }
.navbar { position: absolute; right: 1px; top: 166px; display: flex; flex-direction: column; align-items: center; width: 36px; height: 118px; border: 2px solid #b9b9b9; border-radius: 6px; background: #f3f3f3; }
.navbar .corner { align-self: flex-end; margin: 1px 2px 7px 0; }
.navbar .last { margin: auto 2px 1px 0; }
.navbar .tiny { height: 15px; }
.navbar .caret { border-top-color: #777; }
.navbar hr { width: 26px; margin: 0 0 7px; border: 0; border-top: 1px solid #bbb; }
.view-bar { display: flex; align-items: center; flex: none; height: 18px; background: #f0f0f0; }
.scale { width: 76px; padding-left: 21px; text-align: left; font: 10px/16px "DejaVu Sans Mono", monospace; }
.vb { display: grid; place-items: center; width: 21px; height: 18px; }
.vb svg { width: 16px; height: 16px; }
.hscroll { display: flex; align-items: center; justify-content: space-between; flex: 1; height: 18px; margin-left: 1px; padding: 0 9px 0 6px; }
.hthumb { width: 15px; height: 15px; margin-left: auto; margin-right: 187px; border: 1px solid #888; border-radius: 2px; background: linear-gradient(#f6f6f6, #d0d0d0); }
```
